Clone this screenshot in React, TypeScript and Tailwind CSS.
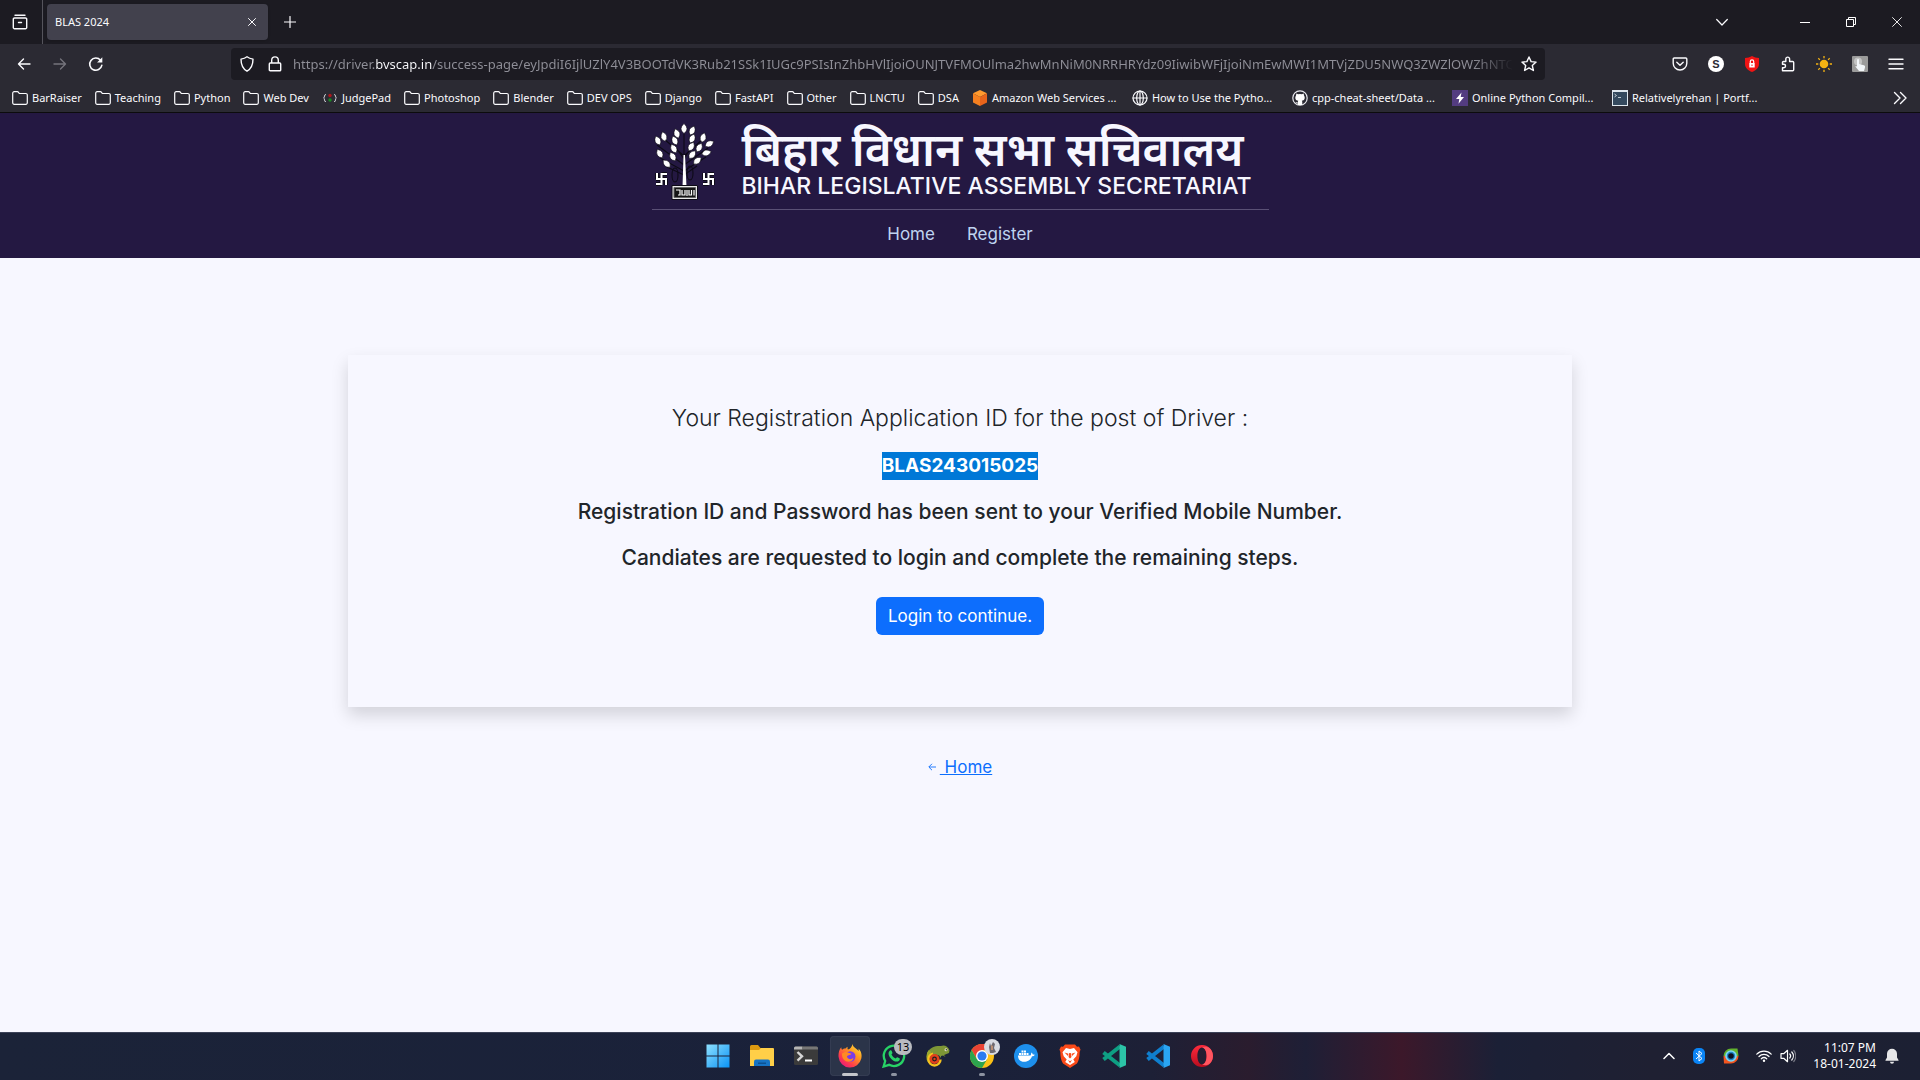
import type { ReactNode } from 'react';

const stroke = {
  fill: 'none',
  stroke: 'currentColor',
  strokeWidth: 1.4,
  strokeLinecap: 'round' as const,
  strokeLinejoin: 'round' as const,
};

function Icon({ children, size = 'size-4', box = '0 0 16 16' }: { children: ReactNode; size?: string; box?: string }) {
  return (
    <svg viewBox={box} className={`${size} shrink-0`} aria-hidden="true">
      {children}
    </svg>
  );
}

/* ---------- Browser icons ---------- */

const FolderIcon = () => (
  <Icon>
    <path {...stroke} strokeWidth={1.2} d="M.7 3.2a1.5 1.5 0 0 1 1.5-1.5h3.2c.5 0 .8.2 1.1.6l.8 1.2h6.5a1.5 1.5 0 0 1 1.5 1.5v7.8a1.5 1.5 0 0 1-1.5 1.5H2.2a1.5 1.5 0 0 1-1.5-1.5z" />
  </Icon>
);

const BracesIcon = () => (
  <Icon>
    <path d="M4 4.500Q2.500 4.500 2.500 6T1.500 8Q2.500 8 2.500 10T4 11.500M12 4.500q1.500 0 1.500 1.500t1 2q-1 0-1 2t-1.500 1.500" fill="none" stroke="#c9c9cf" strokeWidth="1" />
    <circle cx="8" cy="5.5" r="1.7" fill="#b0161b" />
    <circle cx="8" cy="10" r="1.7" fill="#188a22" />
  </Icon>
);

const AwsIcon = () => (
  <Icon>
    <path d="M8 0l7 3.200L8 7 1 3.200z" fill="#ff9a2e" />
    <path d="M1 3.200L8 7v9l-7-3.400z" fill="#f58020" />
    <path d="M15 3.200L8 7v9l7-3.400z" fill="#e8641b" />
  </Icon>
);

const GlobeIcon = () => (
  <Icon>
    <g {...stroke} strokeWidth={1.2}>
      <circle cx="8" cy="8" r="7" />
      <ellipse cx="8" cy="8" rx="3.3" ry="7" />
      <path d="M1 8h14M8 1v14" />
    </g>
  </Icon>
);

const GithubIcon = () => (
  <Icon>
    <circle cx="8" cy="8" r="7.2" fill="none" stroke="#e8e8ee" strokeWidth="1.2" />
    <path fill="#fff" d="M4.300 3.500l1.800.8a8 8 0 0 1 3.800 0l1.800-.8.3 2c1.600 2.500.4 5-2.200 5.200.6.600.5 1.500.5 4.200H5.900v-1.500c-1.600.3-2-.6-2.400-1.300 1 .2 1.300.8 2.300.5 0-.8.2-1.500.5-1.900C3.600 10.500 2.500 8 4 5.500z" />
  </Icon>
);

const BoltIcon = () => (
  <Icon>
    <path fill="#533c80" d="M0 0h16v16H0z" />
    <path fill="#fff" d="M9.500 2.500L4 9h3.300l-.8 4.700L12 7H8.700z" />
  </Icon>
);

const TerminalFavicon = () => (
  <Icon>
    <path fill="#dfe7ee" d="M0 0h16v16H0z" />
    <path fill="#34495e" d="M1 2h14v13H1z" />
    <path d="M2.500 4l2 1.500-2 1.500M6 7.500h3" fill="none" stroke="#cfd8e0" strokeWidth=".9" />
  </Icon>
);

const bookmarks: { label: string; icon?: ReactNode; long?: boolean }[] = [
  { label: 'BarRaiser' },
  { label: 'Teaching' },
  { label: 'Python' },
  { label: 'Web Dev' },
  { label: 'JudgePad', icon: <BracesIcon /> },
  { label: 'Photoshop' },
  { label: 'Blender' },
  { label: 'DEV OPS' },
  { label: 'Django' },
  { label: 'FastAPI' },
  { label: 'Other' },
  { label: 'LNCTU' },
  { label: 'DSA' },
  { label: 'Amazon Web Services ...', icon: <AwsIcon />, long: true },
  { label: 'How to Use the Pytho...', icon: <GlobeIcon />, long: true },
  { label: 'cpp-cheat-sheet/Data ...', icon: <GithubIcon />, long: true },
  { label: 'Online Python Compil...', icon: <BoltIcon />, long: true },
  { label: 'Relativelyrehan | Portf...', icon: <TerminalFavicon />, long: true },
];

const extensions: { label: string; icon: ReactNode }[] = [
  {
    label: 'Save to Pocket',
    icon: (
      <Icon>
        <path {...stroke} d="M2.200 2h11.600a1 1 0 0 1 1 1v4.200a6.800 6.800 0 0 1-13.600 0V3a1 1 0 0 1 1-1zM4.800 6.200L8 9.300l3.200-3.100" />
      </Icon>
    ),
  },
  {
    label: 'S extension',
    icon: <span className="flex size-4 items-center justify-center rounded-full bg-white font-['Liberation_Sans'] text-[11px] font-bold text-[#2b2a33]">S</span>,
  },
  {
    label: 'Ad blocker',
    icon: (
      <Icon>
        <path fill="#f01414" d="M8 0c2 1.300 4.500 1.800 7 1.900V8c0 4-3.500 6.700-7 8-3.500-1.300-7-4-7-8V1.900C3.500 1.800 6 1.300 8 0z" />
        <path fill="#fff" d="M5.300 7h5.400v4.500H5.300z" />
        <path fill="none" stroke="#fff" strokeWidth="1.2" d="M6.300 7V5.500a1.700 1.700 0 0 1 3.400 0V7" />
        <path stroke="#f01414" d="M8 8.500V10" />
      </Icon>
    ),
  },
  {
    label: 'Extensions',
    icon: (
      <Icon>
        <path {...stroke} d="M2.500 14.800h10.200a1 1 0 0 0 1-1V6.500a1 1 0 0 0-1-1H9.600V3a1.900 1.900 0 0 0-3.800 0v2.500H3.500a1 1 0 0 0-1 1v1.700h1.300a1.700 1.700 0 0 1 0 3.500H2.500z" />
      </Icon>
    ),
  },
  {
    label: 'Light theme',
    icon: (
      <Icon>
        <circle cx="8" cy="8" r="4.3" fill="#f5b312" />
        <path stroke="#f5b312" strokeWidth="1.3" d="M8 0v2.300M8 13.700V16M0 8h2.300M13.700 8H16M2.300 2.300l1.600 1.600M12.100 12.100l1.600 1.600M2.300 13.700l1.600-1.600M12.100 3.900l1.600-1.600" />
      </Icon>
    ),
  },
  {
    label: 'Touch helper',
    icon: (
      <Icon>
        <rect width="16" height="16" rx="1" fill="#9b9b9b" />
        <circle cx="6" cy="5.5" r="4" fill="#c4c4c4" />
        <path fill="#f2f6fa" d="M5 3.500q1.300-1 2 0V8l5 1.200q1.500.5 1 2.300L12 15H7L3.300 10.500q.7-1 1.700 0z" />
      </Icon>
    ),
  },
  {
    label: 'Menu',
    icon: (
      <Icon>
        <path {...stroke} d="M1 3.200h14M1 8h14M1 12.800h14" />
      </Icon>
    ),
  },
];

const pageUrl =
  'https://driver.bvscap.in/success-page/eyJpdiI6IjlUZlY4V3BOOTdVK3Rub21SSk1IUGc9PSIsInZhbHVlIjoiOUNJTVFMOUlma2hwMnNiM0NRRHRYdz09IiwibWFjIjoiNmEwMWI1MTVjZDU5NWQ3ZWZlOWZhNTQ';

function TabBar() {
  return (
    <div className="flex h-11 items-center bg-[#1c1b22]">
      <button aria-label="Recent browsing" className="flex h-11 w-[43px] items-center justify-center border-r border-[#55545c] pr-0.5">
        <Icon>
          <path {...stroke} d="M3 1.200h10M2.500 4h11a1.200 1.200 0 0 1 1.200 1.200v8.300a1.200 1.200 0 0 1-1.200 1.200h-11a1.200 1.200 0 0 1-1.200-1.200V5.200A1.200 1.200 0 0 1 2.500 4zM6.500 8.500h3" />
        </Icon>
      </button>
      <div className="ml-1 flex h-9 w-[221px] items-center justify-between rounded bg-[#42414d] pr-2 pl-2 shadow-sm">
        <span className="text-[11px]">BLAS 2024</span>
        <button aria-label="Close tab" className="flex size-4 items-center justify-center">
          <Icon size="size-2" box="0 0 8 8">
            <path {...stroke} strokeWidth={1} d="M.5 .5l7 7M7.500 .5l-7 7" />
          </Icon>
        </button>
      </div>
      <button aria-label="New tab" className="ml-3 flex size-5 items-center justify-center">
        <Icon size="size-3" box="0 0 12 12">
          <path {...stroke} strokeWidth={1.2} d="M6 .5v11M.5 6h11" />
        </Icon>
      </button>
      <div className="ml-auto flex items-center">
        <button aria-label="List all tabs" className="mr-11 flex size-8 items-center justify-center">
          <Icon size="size-3" box="0 0 12 12">
            <path {...stroke} strokeWidth={1.2} d="M.7 3.500L6 9l5.300-5.500" />
          </Icon>
        </button>
        <button aria-label="Minimize" className="flex h-8 w-[46px] items-center justify-center">
          <span className="h-px w-2.5 bg-white" />
        </button>
        <button aria-label="Restore" className="flex h-8 w-[46px] items-center justify-center">
          <Icon size="size-2.5" box="0 0 10 10">
            <path fill="none" stroke="#fff" d="M.5 2.500h7v7h-7zM2.500 2.500v-2h7v7h-2" />
          </Icon>
        </button>
        <button aria-label="Close window" className="flex h-8 w-[46px] items-center justify-center">
          <Icon size="size-2.5" box="0 0 10 10">
            <path fill="none" stroke="#fff" strokeWidth=".9" d="M.3 .3l9.400 9.400M9.700 .3L.3 9.700" />
          </Icon>
        </button>
      </div>
    </div>
  );
}

function Toolbar() {
  return (
    <div className="flex h-10 items-center bg-[#2b2a33] pr-1.5">
      <div className="flex w-[231px] shrink-0 items-center pl-1.5">
        <button aria-label="Back" className="flex size-9 items-center justify-center">
          <Icon>
            <path {...stroke} d="M14 8H2.500M7.500 3L2.500 8l5 5" />
          </Icon>
        </button>
        <button aria-label="Forward" disabled className="flex size-9 items-center justify-center text-[#75747c]">
          <Icon>
            <path {...stroke} d="M2 8h11.500M8.500 3l5 5-5 5" />
          </Icon>
        </button>
        <button aria-label="Reload" className="flex size-9 items-center justify-center">
          <Icon>
            <path {...stroke} strokeWidth={1.6} d="M13.800 9.300A6.100 6.100 0 1 1 12.500 4.200" />
            <path fill="currentColor" d="M14.300 1.300v5.200H9.100z" />
          </Icon>
        </button>
      </div>
      <form className="flex h-8 min-w-0 flex-1 items-center rounded bg-[#1c1b22] pr-2 pl-2" onSubmit={(e) => e.preventDefault()}>
        <Icon>
          <path {...stroke} d="M8 .8c1.700 1.300 3.800 2 6 2.300 0 5.500-1.500 9.700-6 12.100C3.500 12.800 2 8.600 2 3.100 4.200 2.800 6.300 2.100 8 .8z" />
        </Icon>
        <span className="w-3 shrink-0" />
        <Icon>
          <path {...stroke} d="M3.200 7h9.600a.9.900 0 0 1 .9.900v6a.9.900 0 0 1-.9.900H3.200a.9.900 0 0 1-.9-.9v-6a.9.900 0 0 1 .9-.9zM4.700 7V4.200a3.300 3.300 0 0 1 6.600 0V7" />
        </Icon>
        <input
          aria-label="Address"
          readOnly
          value={pageUrl}
          className="ml-2.5 min-w-0 flex-1 bg-[linear-gradient(90deg,#8f8f98_83px,#fbfbfe_83px,#fbfbfe_139px,#8f8f98_139px,#8f8f98_calc(100%-40px),transparent)] bg-clip-text pt-0.5 text-[13px] text-transparent outline-none"
        />
        <button type="button" aria-label="Bookmark this page" className="ml-2 flex size-4 items-center justify-center">
          <Icon>
            <path {...stroke} d="M8 1l2.100 4.600 5 .5-3.800 3.400 1.100 5L8 11.900l-4.400 2.600 1.100-5L.9 6.100l5-.5z" />
          </Icon>
        </button>
      </form>
      <div className="ml-[117px] flex shrink-0">
        {extensions.map((e) => (
          <button key={e.label} aria-label={e.label} className="flex size-9 items-center justify-center">
            {e.icon}
          </button>
        ))}
      </div>
    </div>
  );
}

function BookmarksBar() {
  return (
    <nav aria-label="Bookmarks" className="flex h-[29px] items-center justify-between border-b border-[#0c0c0d] bg-[#2b2a33] pr-3 pl-3">
      <ul className="flex items-center gap-[13px]">
        {bookmarks.map((b) => (
          <li key={b.label} className={b.long ? 'w-[147px]' : ''}>
            <a href="#bookmark" className="flex items-center gap-1 text-[11px] whitespace-nowrap">
              {b.icon ?? <FolderIcon />}
              {b.label}
            </a>
          </li>
        ))}
      </ul>
      <button aria-label="More bookmarks">
        <Icon>
          <path {...stroke} d="M2.500 2.500L8 8l-5.500 5.500M8.500 2.500L14 8l-5.500 5.500" />
        </Icon>
      </button>
    </nav>
  );
}

/* ---------- Site ---------- */

const leaves: [number, number, number][] = [
  [32, 8, 0], [25, 13, -20], [40, 10, 25], [12, 16, -15], [6, 20, -25], [23, 20, -25], [40, 18, 25],
  [51, 17, 15], [57, 23, 60], [47, 27, 30], [39, 26, 30], [8, 33, -30], [22, 28, -30], [54, 32, 75],
  [40, 34, 40], [21, 36, -30], [15, 43, -45], [45, 40, 50],
];

function Emblem() {
  return (
    <svg viewBox="0 0 64 80" className="h-20 w-16 shrink-0" role="img" aria-label="Emblem of Bihar">
      <g fill="none" stroke="#0d0a16" strokeWidth="1.1">
        <path d="M32 45V12M32 38L22 24M32 38l9-15M32 44L5 24M32 44l24-17M32 50L8 37M32 50l22-14M32 54L15 46M32 54l13-9M31 34L12 18M33 34l18-16" />
        <ellipse cx="23" cy="54" rx="3" ry="7" />
        <ellipse cx="38" cy="52" rx="3" ry="7" />
      </g>
      {leaves.map(([x, y, r]) => (
        <path key={`${x}-${y}`} transform={`translate(${x} ${y}) rotate(${r})`} d="M0-5.500Q6 0 0 4.500-6 0 0-5.500z" fill="#fff" stroke="#0d0a16" strokeWidth=".6" />
      ))}
      <path d="M31.500 34h1.500l1.500 32h-4z" fill="#fff" />
      <g fill="none" stroke="#0d0a16" strokeWidth="4">
        <path d="M9.500 52v12M4 58h11M9.500 53H15M9.500 63H4M5 52v6M14 64v-6" />
        <path d="M56.500 52v12M51 58h11M56.500 53H62M56.500 63H51M52 52v6M61 64v-6" />
      </g>
      <g fill="none" stroke="#fff" strokeWidth="2">
        <path d="M9.500 52v12M4 58h11M9.500 53H15M9.500 63H4M5 52v6M14 64v-6" />
        <path d="M56.500 52v12M51 58h11M56.500 53H62M56.500 63H51M52 52v6M61 64v-6" />
      </g>
      <path d="M20 64.500h25.500v14H20z" fill="#e8e8e8" stroke="#0d0a16" />
      <path d="M22 66.500h21.500v10H22z" fill="#151515" stroke="#666" />
      <path d="M24 69h4v5h-2M30 69v5h3v-5M35 75v-6M37 69v5h2.500v-5M42 69v5.500" fill="none" stroke="#fff" strokeWidth="1.2" />
    </svg>
  );
}

function SiteHeader() {
  return (
    <header className="flex h-[145px] flex-col items-center bg-[#241842] font-['Inter','Noto_Sans',sans-serif] text-[#f7f7ff]">
      <div className="flex h-[97px] w-full max-w-[617px] items-start border-b border-[#5a5075] pt-2">
        <Emblem />
        <div className="ml-[26px] pt-[3px] whitespace-nowrap">
          <p lang="hi" className="text-[46px] leading-[50px] font-semibold">बिहार विधान सभा सचिवालय</p>
          <h1 className="text-[23px] leading-6 font-medium">BIHAR LEGISLATIVE ASSEMBLY SECRETARIAT</h1>
        </div>
      </div>
      <nav className="flex gap-8 pt-3 text-[17px] leading-6 text-[#bfd3f0]">
        <a href="#home">Home</a>
        <a href="#register">Register</a>
      </nav>
    </header>
  );
}

function SuccessPage() {
  return (
    <main className="flex flex-1 flex-col items-center bg-[#f7f7ff] px-4 pt-[97px] font-['Inter',sans-serif] text-[#212529]">
      <section className="flex w-full max-w-[1224px] flex-col items-center px-4 pt-12 pb-[72px] text-center shadow-[0_8px_16px_rgba(0,0,0,0.15)]">
        <h2 className="text-[23px] leading-[30px] font-light">Your Registration Application ID for the post of Driver :</h2>
        <p className="mt-[19px] bg-[#0078d7] text-[19px] leading-7 font-bold text-white">BLAS243015025</p>
        <p className="mt-[18px] text-[21px] leading-7 font-medium">Registration ID and Password has been sent to your Verified Mobile Number.</p>
        <p className="mt-[18px] text-[21px] leading-7 font-medium">Candiates are requested to login and complete the remaining steps.</p>
        <button className="mt-[25px] h-[38px] rounded-md bg-[#0d6efd] px-3 text-[17px] leading-6 text-white">Login to continue.</button>
      </section>
      <a href="#home" className="mt-12 flex items-center gap-1 text-[17px] leading-6 text-[#0d6efd]">
        <Icon size="size-2" box="0 0 8 8">
          <path d="M8 4H1M4 .8L.8 4 4 7.200" fill="none" stroke="currentColor" strokeWidth=".9" />
        </Icon>
        <span className="whitespace-pre underline"> Home</span>
      </a>
    </main>
  );
}

/* ---------- Taskbar ---------- */

const apps: { label: string; icon: ReactNode; active?: boolean; running?: boolean; badge?: ReactNode }[] = [
  {
    label: 'Start',
    icon: (
      <>
        <defs>
          <linearGradient id="win" x1="0" y1="0" x2="1" y2="1">
            <stop offset="0" stopColor="#8ee0ff" />
            <stop offset="1" stopColor="#0a93f5" />
          </linearGradient>
        </defs>
        <path fill="url(#win)" d="M.5 .5h11v11H.5zM12.500 .5h11v11h-11zM.5 12.500h11v11H.5zM12.500 12.500h11v11h-11z" />
      </>
    ),
  },
  {
    label: 'File Explorer',
    icon: (
      <>
        <path fill="#dd9a10" d="M0 2.500q0-1.500 1.500-1.500H8l2.500 3H22v8H0z" />
        <path fill="#ffcf48" d="M0 6h9l2-2h12q1 0 1 1v17H0z" />
        <path fill="#1673c4" d="M4 22v-4.500Q4 15.500 6 15.500h12q2 0 2 2V22z" />
        <path fill="#0c5293" d="M8 18.500h8V20H8z" />
      </>
    ),
  },
  {
    label: 'Terminal',
    icon: (
      <>
        <rect y="2.5" width="24" height="18.5" rx="1.5" fill="#3b3b3b" />
        <path fill="#b5b5b5" d="M0 5.500V4q0-1.500 1.500-1.500h7v3z" />
        <path fill="#777" d="M8.500 2.500h14Q24 2.500 24 4v1.500H8.500z" />
        <path d="M3.500 8l4.500 4.300-4.500 4.300" fill="none" stroke="#d6d6d6" strokeWidth="2.4" />
        <path d="M11 16.500h7" stroke="#fff" strokeWidth="2" />
      </>
    ),
  },
  {
    label: 'Firefox',
    active: true,
    icon: (
      <>
        <defs>
          <linearGradient id="fx" x1="1" y1="0" x2=".2" y2="1">
            <stop offset="0" stopColor="#fff04a" />
            <stop offset=".4" stopColor="#ff9a1f" />
            <stop offset=".75" stopColor="#ff3c4c" />
            <stop offset="1" stopColor="#e5187f" />
          </linearGradient>
        </defs>
        <path fill="url(#fx)" d="M14.500 0c.5 3.500 4 4 6 7 .3-1 .2-1.800 0-2.500 3 3 3.500 6.500 2.800 10A11.500 11.500 0 0 1 .6 13C.2 9.500 1 6 3.200 3.200c.1 1.200.4 2 .9 2.600C5 4.900 6.200 4.400 7.500 4.500c.5-.7 1.300-1.400 2.300-1.800-.5 1.200-.4 2 .1 2.700C12 5.200 14 3 14.500 0z" />
        <circle cx="12.3" cy="12.5" r="5.2" fill="#7a3ce8" />
        <path fill="#ff8a24" d="M4 9.500c2.500-2 5-2 6.500-.7l3 1c-1 1.700-3.500 1-4.500 2.500 0 2.700 4 4 6.500 1.500-.5 4.500-7 5.500-10 1.500C4.300 13.700 3.800 11.500 4 9.500z" />
      </>
    ),
  },
  {
    label: 'WhatsApp',
    running: true,
    badge: <span className="absolute -top-[5px] left-3 flex h-4 w-[18px] items-center justify-center rounded-full bg-[#b9bbc0] text-[11px] leading-none text-black">13</span>,
    icon: (
      <>
        <path fill="none" stroke="#27d366" strokeWidth="2.3" d="M1.600 22.500L3.200 17a10.200 10.200 0 1 1 4 3.800z" />
        <path fill="#27d366" d="M8 6.500c.7-.5 1.300-.3 1.600.3l.8 1.900c.2.600-.7 1.300-.9 1.700 1 2 2.200 3.100 4.200 4 .6-.4 1-1.300 1.700-1.100l2.100 1c.8.500 0 2.300-.8 2.800-2.400 1.400-5.500-.3-7.400-2.200C7.300 13 5 9 8 6.500z" />
      </>
    ),
  },
  {
    label: 'Chameleon',
    icon: (
      <>
        <path fill="#7d9636" d="M1 9C4 3 10 1.500 15 2c3-1.500 7 0 8.500 4.500L23 9l-5 2 1.500 2-2.500-1.500-2 .5v2l-2-2.500C9 10 6 10 4 14l-3 1z" />
        <path fill="none" stroke="#9aa82f" strokeWidth="3" d="M4 7C1.500 10 1 15 3.500 18" />
        <circle cx="8.500" cy="15.5" r="6" fill="none" stroke="#f5c21f" strokeWidth="2.4" strokeDasharray="26 12" />
        <circle cx="8.500" cy="15" r="3.700" fill="#1c1c22" stroke="#e4401b" strokeWidth="2.6" />
        <circle cx="8.500" cy="15" r="1.2" fill="#e4401b" />
        <circle cx="20" cy="5.8" r="1.5" fill="#e9e9d0" />
        <circle cx="20.3" cy="5.8" r=".7" fill="#222" />
      </>
    ),
  },
  {
    label: 'Chrome',
    running: true,
    badge: (
      <span className="absolute -top-[5px] left-3.5 size-4 overflow-hidden rounded-full bg-[#d9dce2]">
        <svg viewBox="0 0 16 16" aria-hidden="true">
          <path fill="#6e6a70" d="M6 14L5 8l1-4 1 3 2-4 2 2-1 4 2 4-3 1z" />
          <path fill="#b98f74" d="M7 6l2 1v4H7z" />
        </svg>
      </span>
    ),
    icon: (
      <>
        <circle cx="12" cy="12" r="12" fill="#fbc116" />
        <path fill="#ea4335" d="M1.600 6A12 12 0 0 1 22.400 6H12L7 15z" />
        <path fill="#2da44e" d="M1.600 6A12 12 0 0 0 12 24l5.200-9L12 12l-5.200 3z" />
        <circle cx="12" cy="12" r="6" fill="#fff" />
        <circle cx="12" cy="12" r="4.6" fill="#2b7cf0" />
      </>
    ),
  },
  {
    label: 'Docker',
    icon: (
      <>
        <circle cx="12" cy="12" r="12" fill="#1d8fec" />
        <path fill="#fff" d="M4 11.500h12.500c.8-1 .5-2.300 1-3 .8.500 1.200 1.200 1.300 2 .7-.1 1.400 0 1.900.3-.4 1.100-1.500 1.500-2.700 1.500-1.500 4-4.500 5.500-8 5.500-4 0-6-2.500-6-6.300zM5 9h2v2H5zM7.500 9h2v2h-2zM10 9h2v2h-2zM12.500 9h2v2h-2zM7.500 6.500h2v2h-2zM10 6.500h2v2h-2z" />
      </>
    ),
  },
  {
    label: 'Brave',
    icon: (
      <>
        <path fill="#fb4a18" d="M7 .5h10l2 2.200 2-.2 1.500 3-.8 2.500c0 5-1 9-2.700 11.500L12 24l-7-4.500C3.300 17 2.300 13 2.300 8l-.8-2.500 1.500-3 2 .2z" />
        <path fill="#fff" d="M8 4l4 1 4-1 3.500 4.300-1.200 4-3 3.200 1.500 2.500L12 21l-4.800-3 1.500-2.500-3-3.200-1.200-4z" />
        <path fill="#fb4a18" d="M6.500 8.500l4 1.200-.5 2.300zM17.500 8.500l-4 1.200.5 2.300zM10 16l2 1.200 2-1.200-2 3.200zM11.200 9h1.600l.7 4-1.500 1.500-1.500-1.500z" />
      </>
    ),
  },
  {
    label: 'VS Code Insiders',
    icon: (
      <>
        <path d="M1.500 8.500L18 21.500M1.500 15.500L18 2.500" stroke="#0e9f83" strokeWidth="4" />
        <path fill="#2cc4a7" d="M17.500 0L24 2.700v18.600L17.500 24z" />
      </>
    ),
  },
  {
    label: 'VS Code',
    icon: (
      <>
        <path d="M1.500 8.500L18 21.500M1.500 15.500L18 2.500" stroke="#0f7fce" strokeWidth="4" />
        <path fill="#2aa5f2" d="M17.500 0L24 2.700v18.600L17.500 24z" />
      </>
    ),
  },
  {
    label: 'Opera',
    icon: (
      <>
        <defs>
          <linearGradient id="op" x1="0" y1="0" x2="0" y2="1">
            <stop offset="0" stopColor="#ff2b3c" />
            <stop offset="1" stopColor="#b90d1f" />
          </linearGradient>
        </defs>
        <path fill="url(#op)" fillRule="evenodd" d="M12 1a11 11 0 1 0 0 22 11 11 0 0 0 0-22zm0 2.500c2.800 0 4.600 3.800 4.600 8.500s-1.800 8.500-4.600 8.500S7.400 16.700 7.400 12 9.200 3.500 12 3.500z" />
        <path fill="#ff5560" d="M12 3.500C19 .5 23 7 23 12s-4 11.500-11 8.500c2.800 0 4.600-3.800 4.600-8.500S14.800 3.500 12 3.500z" />
      </>
    ),
  },
];

function Taskbar() {
  return (
    <footer className="grid h-12 grid-cols-[1fr_auto_1fr] items-center border-t border-[#3c4258] bg-[linear-gradient(90deg,#1b2338_0%,#1a213a_50%,#1d2036_60%,#2a1c2e_65%,#1e1f36_68%,#3c182a_73%,#1b2036_78%,#1f2032_86%,#1c2033_100%)] pb-0.5 text-white">
      <ul className="col-start-2 flex gap-1">
        {apps.map((a) => (
          <li key={a.label}>
            <button
              aria-label={a.label}
              className={`relative flex size-10 items-center justify-center rounded ${a.active ? 'bg-[#2b3449] ring-1 ring-[#343c52] ring-inset' : ''}`}
            >
              <span className="relative">
                <Icon size="size-6" box="0 0 24 24">{a.icon}</Icon>
                {a.badge}
              </span>
              {a.active && <span className="absolute bottom-0 left-3 h-[3px] w-4 rounded-full bg-[#c4c6cb]" />}
              {a.running && <span className="absolute bottom-0 left-[17px] h-[3px] w-1.5 rounded-full bg-[#8d93a1]" />}
            </button>
          </li>
        ))}
      </ul>
      <div className="flex items-center justify-end pr-5">
        <button aria-label="Show hidden icons" className="mr-[18px]">
          <Icon size="size-3" box="0 0 12 12">
            <path {...stroke} strokeWidth={1.5} d="M1 8.500l5-5 5 5" />
          </Icon>
        </button>
        <button aria-label="Bluetooth" className="mr-[18px]">
          <svg viewBox="0 0 12 16" className="h-4 w-3" aria-hidden="true">
            <rect width="12" height="16" rx="5" fill="#0a84f5" />
            <path d="M3 5l6 5.500L6 13V3l3 2.500L3 11" fill="none" stroke="#fff" />
          </svg>
        </button>
        <button aria-label="Screen recorder" className="mr-[17px]">
          <Icon>
            <path fill="#f2551f" d="M15.500 8A7.500 7.500 0 0 1 8 15.500H1L.5 8z" />
            <path fill="#63b32e" d="M.5 8A7.500 7.500 0 0 1 8 .5h6.500l1 7.500z" />
            <circle cx="8" cy="8" r="5.8" fill="#7fd6f5" />
            <circle cx="8" cy="8" r="4.2" fill="#1c86c9" />
            <circle cx="8" cy="8" r="2.8" fill="#0b1020" />
          </Icon>
        </button>
        <button aria-label="Network and volume" className="flex gap-2">
          <Icon>
            <path {...stroke} strokeWidth={1.2} d="M.8 6.200a10.200 10.200 0 0 1 14.400 0M3 8.500a7 7 0 0 1 10 0M5.300 10.800a3.900 3.900 0 0 1 5.400 0" />
            <circle cx="8" cy="12.8" r="1.2" fill="currentColor" />
          </Icon>
          <Icon>
            <path {...stroke} strokeWidth={1.2} d="M1 5.700h2.700L7.500 2.300v11.400l-3.800-3.400H1zM9.800 6a3 3 0 0 1 0 4M11.800 4a6 6 0 0 1 0 8" />
            <path {...stroke} strokeWidth={1.2} opacity=".4" d="M13.800 2.500a8.500 8.500 0 0 1 0 11" />
          </Icon>
        </button>
        <time className="ml-[17px] text-right text-xs leading-4">
          11:07 PM
          <br />
          18-01-2024
        </time>
        <button aria-label="Notifications" className="ml-2">
          <Icon>
            <path fill="#e6e6e8" d="M8 .8a5 5 0 0 0-5 5v3.700L1.500 12v.7h13V12L13 9.500V5.800a5 5 0 0 0-5-5zM6 13.700h4a2 2 0 0 1-4 0z" />
          </Icon>
        </button>
      </div>
    </footer>
  );
}

export default function App() {
  return (
    <div className="flex min-h-screen flex-col font-['Noto_Sans',sans-serif] text-[#fbfbfe]">
      <TabBar />
      <Toolbar />
      <BookmarksBar />
      <SiteHeader />
      <SuccessPage />
      <Taskbar />
    </div>
  );
}
